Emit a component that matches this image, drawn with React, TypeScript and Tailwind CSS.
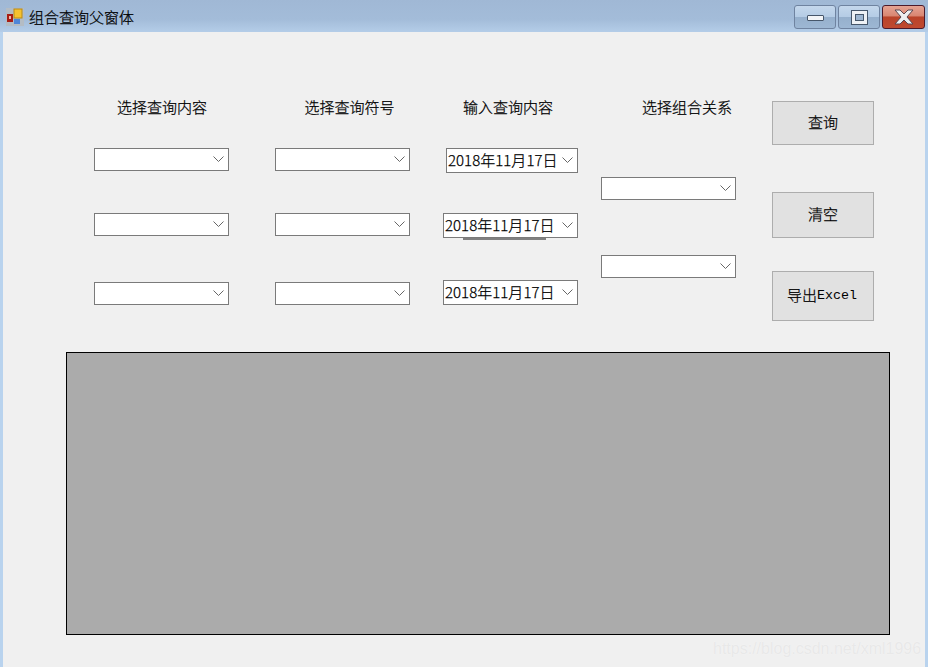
const cjk = "font-['Noto_Sans_CJK_SC','Liberation_Sans',sans-serif] font-light [-webkit-text-stroke:0.25px_#000]";

function Chevron() {
  return (
    <svg width="11" height="7" viewBox="0 0 11 7" className="shrink-0">
      <path d="M0.5 0.5 L5.5 5.5 L10.5 0.5" fill="none" stroke="#666" strokeWidth="1" />
    </svg>
  );
}

function Combo({ className = "" }: { className?: string }) {
  return (
    <div className={`flex h-[23px] w-[135px] items-center justify-end border border-[#7a7a7a] bg-white pr-[4px] ${className}`}>
      <Chevron />
    </div>
  );
}

function DatePicker({ className = "" }: { className?: string }) {
  return (
    <div className={`flex h-[25px] items-center justify-between border border-[#7a7a7a] bg-white pl-[1px] pr-[4px] text-[15px] leading-none text-black ${className}`}>
      <span className={`-mt-[2px] whitespace-nowrap tracking-[0.03px] ${cjk}`}>2018年11月17日</span>
      <Chevron />
    </div>
  );
}

function Label({ children, className = "" }: { children: string; className?: string }) {
  return (
    <div className={`-mt-[1px] mb-[1px] h-[18px] whitespace-nowrap text-center text-[15px] leading-[18px] text-black ${cjk} ${className}`}>
      {children}
    </div>
  );
}

function FormButton({ children, className = "" }: { children: React.ReactNode; className?: string }) {
  return (
    <div className={`flex w-[102px] items-center justify-center border border-[#adadad] bg-[#e1e1e1] pb-[2px] text-[15px] text-black ${cjk} ${className}`}>
      {children}
    </div>
  );
}

function WindowButton({ kind }: { kind: "min" | "max" | "close" }) {
  const close = kind === "close";
  return (
    <div
      className={`relative flex h-[24px] items-center justify-center rounded-[3px] border ${
        close
          ? "w-[43px] border-[#4d1a2a] bg-[linear-gradient(#e5a393_0%,#d98672_45%,#b9432a_50%,#c0492f_100%)]"
          : "w-[42px] border-[#6f83a0] bg-[linear-gradient(#c4d7ec_0%,#b5cce5_48%,#96b0cd_52%,#9db7d3_100%)]"
      }`}
    >
      {kind === "min" && <div className="mt-[2px] h-[6px] w-[17px] rounded-[1px] border border-[#46566a] bg-[#f2f4f7]" />}
      {kind === "max" && (
        <div className="flex h-[15px] w-[17px] items-center justify-center border border-[#46566a] bg-[#eef1f5]">
          <div className="h-[7px] w-[9px] border border-[#46566a] bg-[#9db5d0]" />
        </div>
      )}
      {kind === "close" && (
        <svg width="22" height="16" viewBox="0 0 22 16">
          <path d="M2 1 H7 L11 5 L15 1 H20 L14 8 L20 15 H15 L11 11 L7 15 H2 L8 8 Z" fill="#eceef0" stroke="#5a4650" strokeWidth="1" />
        </svg>
      )}
    </div>
  );
}

function AppIcon() {
  return (
    <svg width="18" height="18" viewBox="0 0 18 18" className="mt-[2px] shrink-0">
      <rect x="0" y="0" width="18" height="18" fill="#b4bcc4" />
      <rect x="1" y="6" width="6" height="8" fill="#a81c14" />
      <rect x="3" y="8" width="2" height="3" fill="#f0b8a8" />
      <rect x="8" y="1" width="8" height="9" fill="#f6c12e" stroke="#b98a14" strokeWidth="1" />
      <rect x="8" y="11" width="6" height="5" fill="#4f86d8" />
    </svg>
  );
}

export default function App() {
  return (
    <div className="relative flex h-[667px] w-[928px] flex-col overflow-hidden bg-[#b9d3ee]">
      <div className="flex h-[32px] shrink-0 items-center bg-[linear-gradient(#a0b8d5_0%,#a3bcd9_60%,#b4cde8_100%)] pl-[6px] pr-[3px]">
        <AppIcon />
        <span className={`ml-[5px] text-[15px] leading-none text-black ${cjk}`}>组合查询父窗体</span>
        <div className="ml-auto flex gap-[2px] pt-[2px]">
          <WindowButton kind="min" />
          <WindowButton kind="max" />
          <WindowButton kind="close" />
        </div>
      </div>

      <div className="mx-[3px] flex-1 bg-[#f0f0f0]">
        <div className="flex h-[320px] pl-[91px]">
          <div className="flex w-[135px] flex-col pt-[67px]">
            <Label className="pl-[1px]">选择查询内容</Label>
            <Combo className="mt-[31px]" />
            <Combo className="mt-[42px]" />
            <Combo className="mt-[46px]" />
          </div>
          <div className="ml-[46px] flex w-[135px] flex-col pt-[67px]">
            <Label className="pl-[14px]">选择查询符号</Label>
            <Combo className="mt-[31px]" />
            <Combo className="mt-[42px]" />
            <Combo className="mt-[46px]" />
          </div>
          <div className="ml-[33px] flex w-[135px] flex-col pt-[67px]">
            <Label className="pr-[5px]">输入查询内容</Label>
            <DatePicker className="ml-[3px] mt-[31px] w-[132px]" />
            <DatePicker className="mt-[40px] w-[135px]" />
            <div className="ml-[20px] h-[2px] w-[83px] bg-[#808080]" />
            <DatePicker className="mt-[40px] w-[135px]" />
          </div>
          <div className="ml-[23px] flex w-[135px] flex-col pt-[67px]">
            <Label className="pl-[37px]">选择组合关系</Label>
            <Combo className="mt-[60px]" />
            <Combo className="mt-[55px]" />
          </div>
          <div className="ml-[36px] flex flex-col pt-[69px]">
            <FormButton className="h-[44px]">查询</FormButton>
            <FormButton className="mt-[47px] h-[46px]">清空</FormButton>
            <FormButton className="mt-[33px] h-[50px] pr-[2px]">
              <span>导出</span>
              <span className="mt-[2px] font-['Liberation_Mono',monospace] text-[13.33px] [-webkit-text-stroke:0]">Excel</span>
            </FormButton>
          </div>
        </div>
        <div className="ml-[63px] h-[283px] w-[824px] border border-black bg-[#ababab]" />
      </div>

      <div className="absolute left-[713px] top-[637px] whitespace-nowrap font-['Liberation_Sans',sans-serif] text-[16px] leading-[24px] text-[#e8e8e8] [text-shadow:0_0_1px_#fafafa]">
        https://blog.csdn.net/xml1996
      </div>
    </div>
  );
}
